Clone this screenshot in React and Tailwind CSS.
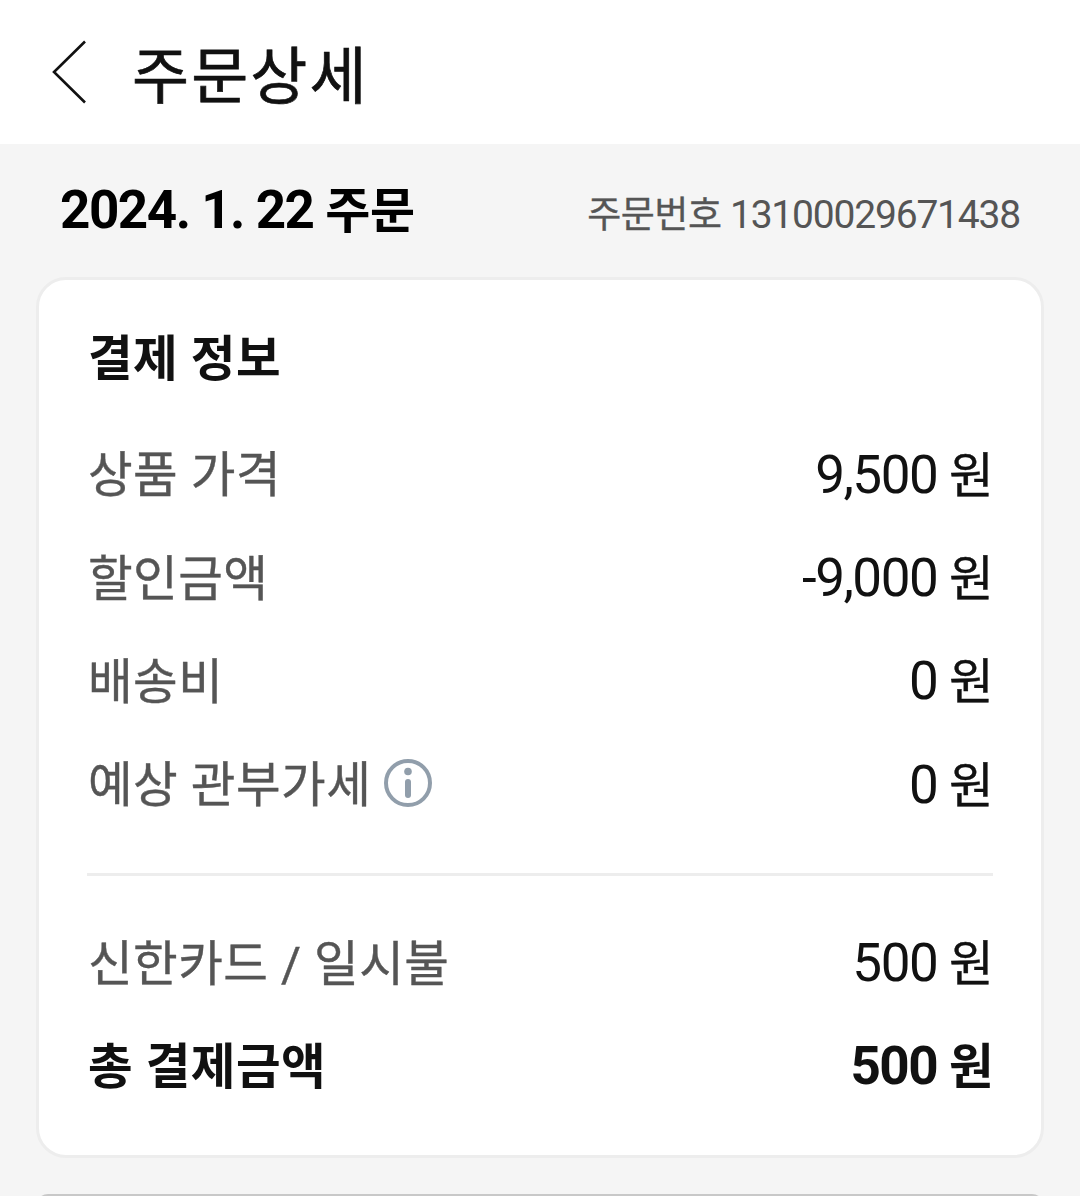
import React from 'react';

const rows = [
  { label: '상품 가격', amount: '9,500' },
  { label: '할인금액', amount: '-9,000' },
  { label: '배송비', amount: '0' },
  { label: '예상 관부가세', amount: '0', info: true },
];

function InfoIcon() {
  return (
    <svg width="48" height="48" viewBox="0 0 48 48" fill="none" className="mb-2 ml-[13px]">
      <circle cx="24" cy="24" r="22" stroke="#919eab" strokeWidth="4" />
      <circle cx="24" cy="12.5" r="3.8" fill="#919eab" />
      <path d="M24 23v13" stroke="#919eab" strokeWidth="6" strokeLinecap="round" />
    </svg>
  );
}

function PriceRow({ label, amount, info, bold }) {
  // regular weight hangul is a bit thin next to the digits
  const weight = bold ? '' : '[-webkit-text-stroke:0.4px]';

  return (
    <div className={`flex h-[103.3px] items-center justify-between whitespace-nowrap ${bold ? 'font-bold' : ''}`}>
      <div className={`flex items-center pt-1 pl-px text-[48.5px] tracking-[0.5px] ${bold ? '' : 'text-[#555]'}`}>
        <span className={weight}>{label}</span>
        {info && <InfoIcon />}
      </div>
      <span className={`text-[53px] tracking-[-1.5px] ${bold ? '' : 'pt-px'}`}>
        {amount} <span className={`text-[48.5px] tracking-[-0.5px] ${weight}`}>원</span>
      </span>
    </div>
  );
}

export default function App() {
  return (
    <div className="h-[1196px] overflow-hidden bg-[#f5f5f5] font-[Roboto,'Noto_Sans_CJK_KR',sans-serif] text-[#111]">
      <header className="flex h-36 items-center bg-white pl-[52px]">
        <svg width="35" height="64" viewBox="0 0 35 64" fill="none">
          <path d="M33 1.5L2 32l31 30.5" stroke="#111" strokeWidth="2.6" />
        </svg>
        <h1 className="mt-3 ml-[45px] text-[62px] leading-none tracking-[2.1px] [-webkit-text-stroke:0.7px]">주문상세</h1>
      </header>

      <div className="flex h-[133px] items-center justify-between px-[60px]">
        <h2 className="text-[53px] font-bold tracking-[-1.5px] text-black">
          2024. 1. 22 <span className="text-[49px] tracking-[-0.3px]">주문</span>
        </h2>
        <div className="mt-2.5 text-[39px] tracking-[-1.2px] text-[#555]">
          <span className="text-[37px] tracking-[-0.5px] [-webkit-text-stroke:0.3px]">주문번호</span> 13100029671438
        </div>
      </div>

      <section className="mx-9 h-[881px] rounded-[30px] border-3 border-[#ededed] bg-white px-12 pt-[27px] leading-none">
        <h3 className="flex h-[103px] items-center pt-1 pl-px text-[48.5px] font-bold tracking-[0.5px]">결제 정보</h3>
        <div className="mt-[13px]">
          {rows.map((row) => (
            <PriceRow key={row.label} {...row} />
          ))}
        </div>
        <hr className="mt-[37px] mb-[35px] border-t-3 border-[#ededed]" />
        <PriceRow label="신한카드 / 일시불" amount="500" />
        <PriceRow label="총 결제금액" amount="500" bold />
      </section>

      <div className="mx-9 mt-9 h-20 rounded-xl bg-[#c8c8c8]" />
    </div>
  );
}
